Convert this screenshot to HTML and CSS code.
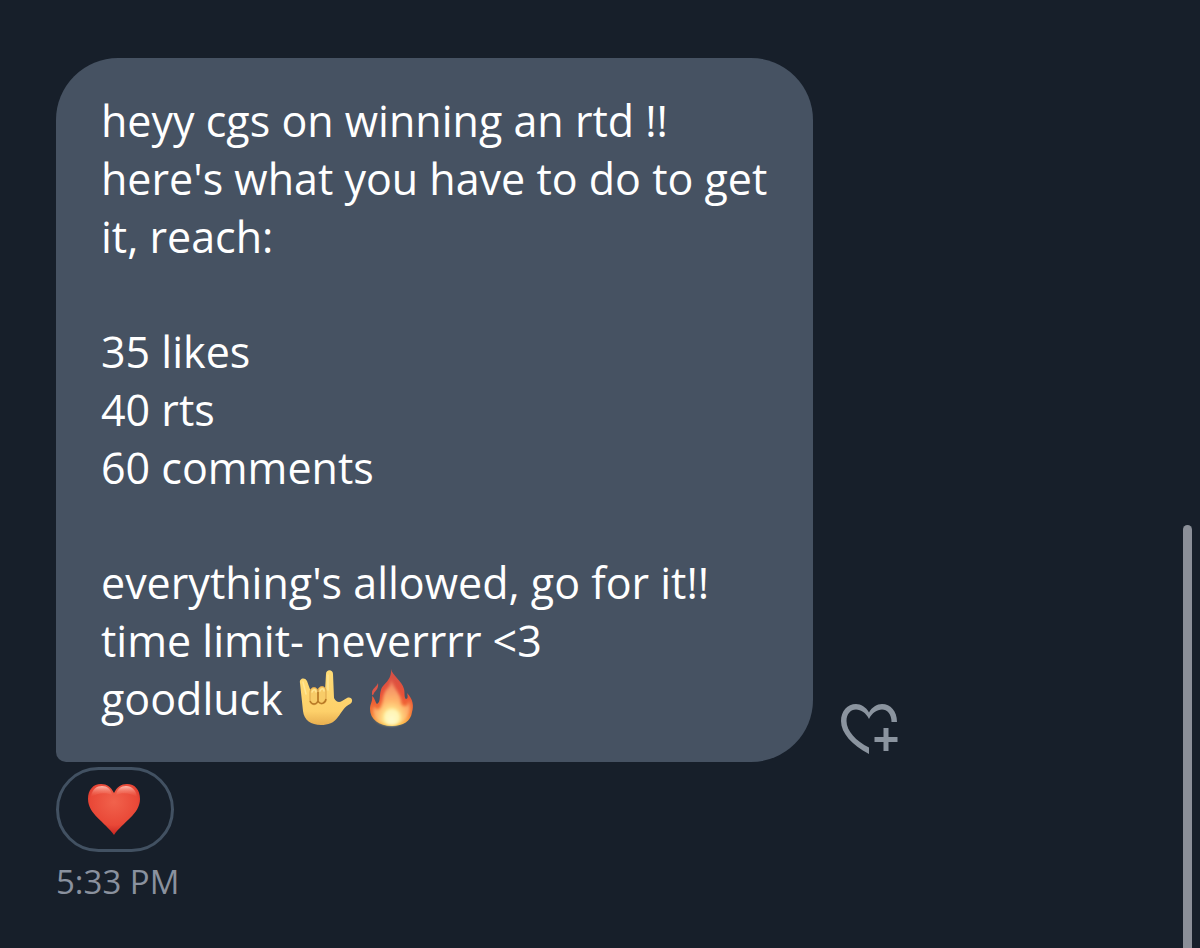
FILE: index.html
```html
<!DOCTYPE html>
<html lang="en">
<head>
    <meta charset="UTF-8">
    <meta name="viewport" content="width=device-width, initial-scale=1.0">
    <title>Messages</title>
    <link rel="stylesheet" href="styles.css">
</head>
<body>

    <main class="chat">
        <div class="message-row">
            <div class="bubble">
                <p>heyy cgs on winning an rtd !!<br>
                here's what you have to do to get it, reach:</p>

                <p>35 likes<br>
                40 rts<br>
                60 comments</p>

                <p>everything's allowed, go for it!!<br>
                time limit- neverrrr &lt;3<br>
                goodluck
                <svg class="emoji" viewBox="0 0 56 58" role="img" aria-label="love-you gesture">
                    <defs>
                        <linearGradient id="skin" x1="0" y1="0" x2="0" y2="1">
                            <stop offset="0" stop-color="#ffdc76"/>
                            <stop offset="0.75" stop-color="#fdd06a"/>
                            <stop offset="1" stop-color="#e8ae50"/>
                        </linearGradient>
                    </defs>
                    <path d="M4 13C3 8 9 7 11 11L15 22L29 21L30 4C30 -1 37 -1 37 4L38 28C40 32 43 33 46 31L51 28C56 26 58 32 54 34C48 37 46 42 42 47C38 53 32 55 25 55C15 55 8 50 7 41Z" fill="url(#skin)"/>
                    <path d="M14 29V22C14 16 22 16 22 22V31C22 36 14 36 14 31ZM22 30V21C22 15 30 15 30 21V30C30 35 22 35 22 31Z" fill="#f8cc68" stroke="#dca34a" stroke-width="1"/>
                    <path d="M14 31C16 35 20 35 22 31C24 35 29 34 30 29M22 22V31" fill="none" stroke="#b87925" stroke-width="1.5"/>
                    <path d="M16 22C17 19 20 19 20 22M24 21C25 18 28 18 28 21M32 5V20M7 12L10 24" fill="none" stroke="#ffe695" stroke-width="1.5" stroke-linecap="round"/>
                </svg>
                <svg class="emoji" viewBox="0 0 56 58" role="img" aria-label="fire">
                    <defs>
                        <linearGradient id="flame" x1="0" y1="0" x2="0" y2="1">
                            <stop offset="0" stop-color="#d05048"/>
                            <stop offset="0.45" stop-color="#ea5238"/>
                            <stop offset="0.8" stop-color="#f77a32"/>
                            <stop offset="1" stop-color="#ffc646"/>
                        </linearGradient>
                        <radialGradient id="glow" cx="0.5" cy="0.88" r="0.85">
                            <stop offset="0" stop-color="#fffdd8"/>
                            <stop offset="0.2" stop-color="#ffec8e"/>
                            <stop offset="0.5" stop-color="#ffb36a"/>
                            <stop offset="1" stop-color="#ee7f62"/>
                        </radialGradient>
                        <filter id="soft" x="-15%" y="-15%" width="130%" height="130%">
                            <feGaussianBlur stdDeviation="1.5"/>
                        </filter>
                    </defs>
                    <path d="M26 -1C27 5 37 11 39 19C40 23 39 28 41 29C43 29 43 26 42 23C48 29 49 36 47 42C46 51 38 56 27 56C14 56 5 49 5 39C5 34 8 31 7 26C10 28 10 32 12 34C16 32 14 26 16 20C18 13 27 11 26 -1Z" fill="url(#flame)"/>
                    <path d="M7 23C7 18 12 17 13 13C14 19 10 21 9 23C8 26 7 26 7 23Z" fill="#dd5547"/>
                    <path d="M26 9C28 17 35 23 36 30C36 34 37 36 40 36C43 36 43 34 44 31C47 43 43 54 27 55C12 55 6 47 9 36C11 41 15 40 16 36C19 30 17 26 21 20C24 17 26 15 26 9Z" fill="url(#glow)" filter="url(#soft)"/>
                    <ellipse cx="27" cy="47" rx="8" ry="8" fill="#fffac8" opacity="0.7" filter="url(#soft)"/>
                </svg></p>
            </div>

            <button type="button" class="react" aria-label="Add reaction">
                <svg viewBox="0 0 57 50" aria-hidden="true">
                    <path d="M56 18H50.5C50.5 10 46 5.5 41 5.5C36 5.5 31 9 28 15C25 9 20 5.5 15 5.5C9.5 5.5 5.5 10 5.5 17C5.5 27 15 37 28 43.5V50C11 41 0 29 0 17C0 7 6.5 0 15 0C20 0 25 3 28 8.5C31 3 36 0 41 0C49.5 0 56 7 56 18Z"/>
                    <path d="M42.5 24H47.5V33H56.5V38H47.5V47H42.5V38H33.5V33H42.5Z"/>
                </svg>
            </button>
        </div>

        <button type="button" class="reaction" aria-label="Red heart reaction">
            <svg viewBox="0 0 52 51" aria-hidden="true">
                <defs>
                    <radialGradient id="heart" cx="0.5" cy="0.35" r="0.65">
                        <stop offset="0" stop-color="#f1624c"/>
                        <stop offset="0.7" stop-color="#e94837"/>
                        <stop offset="1" stop-color="#c92622"/>
                    </radialGradient>
                    <linearGradient id="shine" x1="0" y1="0" x2="0" y2="1">
                        <stop offset="0" stop-color="#ffc9bd" stop-opacity="0.9"/>
                        <stop offset="1" stop-color="#f46b55" stop-opacity="0"/>
                    </linearGradient>
                </defs>
                <path d="M26 9C29 3 33 0 39 0C47 0 52 6 52 15C52 30 35 38 26 51C17 38 0 30 0 15C0 6 5 0 13 0C19 0 23 3 26 9Z" fill="url(#heart)"/>
                <path d="M3 13C4 5 9 2 14 2C19 2 23 5 24 11C18 8 9 9 3 13ZM28 11C29 5 33 2 38 2C44 2 48 6 49 13C43 9 34 8 28 11Z" fill="url(#shine)"/>
            </svg>
        </button>

        <time class="time" datetime="17:33">5:33 PM</time>
    </main>

    <div class="scrollbar"></div>

</body>
</html>
```
FILE: styles.css
```css
* {
    box-sizing: border-box;
}

body {
    margin: 0;
    background-color: #171f2a;
    color: #ffffff;
    font-family: "Open Sans", sans-serif;
    overflow: hidden;
}

.chat {
    display: flex;
    flex-direction: column;
    align-items: flex-start;
    padding: 58px 56px 0;
}

.message-row {
    display: flex;
    align-items: flex-end;
    gap: 28px;
}

.bubble {
    max-width: 757px;
    padding: 34px 40px 34px 45px;
    border-radius: 62px 62px 62px 10px;
    background-color: #465262;
    font-size: 43px;
    line-height: 58px;
}

.bubble p {
    margin: 0 0 57px;
}

.bubble p:last-child {
    margin-bottom: 0;
}

.emoji {
    width: 56px;
    height: 58px;
    margin-left: 2px;
    vertical-align: bottom;
    overflow: visible;
}

button {
    border: none;
    background: none;
    cursor: pointer;
}

.react {
    flex-shrink: 0;
    padding: 0;
    margin-bottom: 8px;
}

.react svg {
    display: block;
    width: 57px;
    height: 50px;
    fill: #8b949f;
}

.reaction {
    margin-top: 5px;
    padding: 14px 31px 14px 29px;
    border: 3px solid #425162;
    border-radius: 43px;
}

.reaction svg {
    display: block;
    width: 52px;
    height: 51px;
}

.time {
    margin-top: 8px;
    color: #8a919e;
    font-size: 33px;
    line-height: 44px;
}

/* Scroll thumb, runs off the bottom of the window */
.scrollbar {
    position: fixed;
    top: 55.4%;
    right: 8px;
    bottom: -8px;
    width: 9px;
    border-radius: 5px;
    background-color: #8b8f98;
}
```
